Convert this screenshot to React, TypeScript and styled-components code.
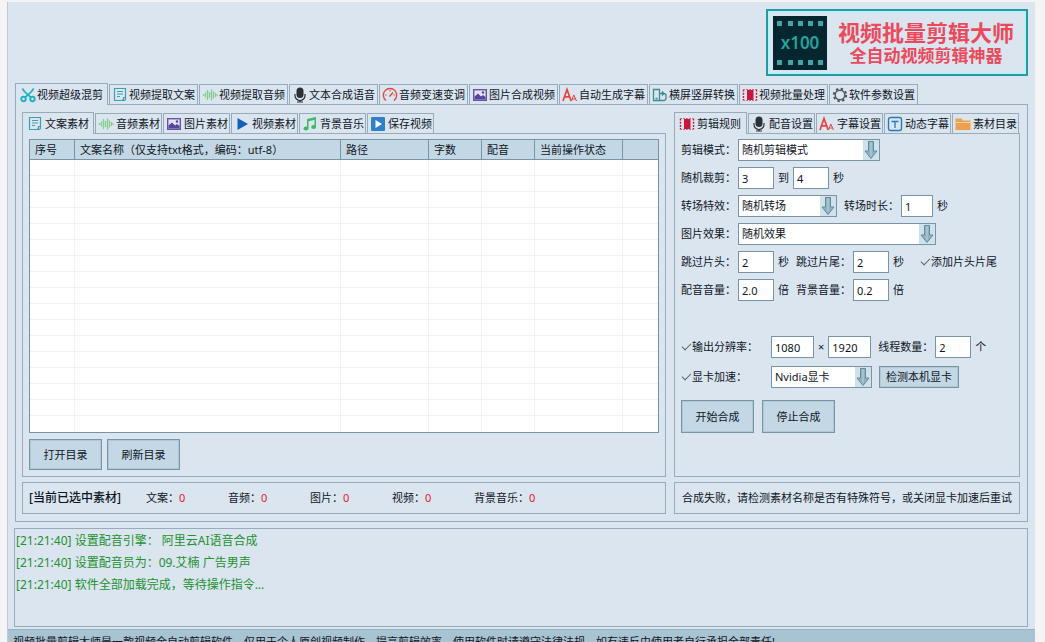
import React from 'react';
import styled, { createGlobalStyle } from 'styled-components';

const c = {
  bg: '#dae5ef',
  line: '#97abba',
  strong: '#7795a7',
  text: '#10161f',
  button: '#c3d8e4',
};

const GlobalStyle = createGlobalStyle`
  * { box-sizing: border-box; }
  body {
    margin: 0;
    height: 100vh;
    overflow: hidden;
    background: #f4f4f4;
    color: ${c.text};
    font-family: "Noto Sans", "Noto Sans CJK SC", sans-serif;
    font-size: 11px;
    line-height: 16px;
  }
  button, input, select { font: inherit; color: inherit; }
`;

const Window = styled.div`
  margin: 2px 10px 0 7px;
  border-left: 1px solid #bccbd6;
  background: ${c.bg};
`;
const Content = styled.div`
  padding: 7px 7px 2px;
`;
const Header = styled.header`
  display: flex;
  justify-content: flex-end;
  padding-bottom: 7px;
`;
const Brand = styled.div`
  display: flex;
  align-items: center;
  gap: 11px;
  width: 262px;
  height: 67px;
  padding: 0 3px;
  border: 2px solid #259a9f;
  box-shadow: inset 0 0 0 2px #b9f1f6;
`;
const BrandMark = styled.div`
  display: grid;
  flex: none;
  margin-left: 2px;
  & > * { grid-area: 1 / 1; place-self: center; }
`;
const MarkText = styled.span`
  font-size: 17px;
  line-height: 20px;
  font-weight: 600;
  color: #27a29d;
`;
const BrandText = styled.div`
  text-align: center;
  font-weight: 700;
  color: #ea4a5c;
  white-space: nowrap;
`;
const BrandTitle = styled.h1`
  margin: 0;
  font-size: 22px;
  line-height: 26px;
`;
const BrandSub = styled.p`
  margin: 0;
  font-size: 17px;
  line-height: 22px;
`;

const TabList = styled.div<{ $tight?: boolean }>`
  display: flex;
  align-items: flex-end;
  gap: 1px;
  height: 22px;
  margin-bottom: -1px;
  position: relative;
  button { gap: ${(p) => (p.$tight ? 1 : 2)}px; }
`;
const Tab = styled.button<{ $w: number }>`
  display: flex;
  align-items: center;
  width: ${(p) => p.$w}px;
  height: 21px;
  padding: 0 0 0 2px;
  border: 1px solid ${c.line};
  background: ${c.bg};
  white-space: nowrap;
  overflow: hidden;
  &[aria-selected='true'] {
    height: 22px;
    padding-left: 4px;
    border-bottom: 0;
  }
  svg { flex: none; }
`;
const Panel = styled.section`
  border: 1px solid ${c.line};
  padding: 7px 7px 7px 6px;
`;
const Columns = styled.div`
  display: grid;
  grid-template-columns: minmax(0, 1fr) 346px;
  gap: 5px 8px;
`;
const Column = styled.div`
  display: flex;
  flex-direction: column;
`;
const SubPanel = styled.div`
  flex: 1;
  border: 1px solid ${c.line};
  padding: 5px 6px 6px;
`;

const Table = styled.table`
  width: 100%;
  table-layout: fixed;
  border: 1px solid ${c.strong};
  border-spacing: 0;
  background: #fff;
  th {
    height: 20px;
    padding: 0 0 0 5px;
    border-left: 1px solid ${c.strong};
    border-bottom: 1px solid ${c.strong};
    background: ${c.button};
    text-align: left;
    font-weight: 400;
    white-space: nowrap;
  }
  th:first-child { border-left: 0; }
  td {
    height: 16px;
    padding: 0;
    border-left: 1px solid #f0f3f4;
    border-bottom: 1px solid #f0f3f4;
  }
  td:first-child { border-left: 0; }
  tr:last-child td { border-bottom: 0; }
`;
const Button = styled.button<{ $small?: boolean }>`
  width: ${(p) => (p.$small ? 80 : 73)}px;
  height: ${(p) => (p.$small ? 22 : 31)}px;
  padding: 0;
  border: 1px solid ${c.strong};
  box-shadow: inset 0 0 0 1px #b0c8d6;
  background: ${c.button};
  white-space: nowrap;
`;
const Actions = styled.div`
  display: flex;
  gap: 5px;
  padding-top: 6px;
`;
const StartActions = styled(Actions)`
  gap: 8px;
  padding-top: 6px;
  ${Button} { height: 33px; }
`;
const StatusBox = styled.div<{ $center?: boolean }>`
  display: flex;
  align-items: center;
  justify-content: ${(p) => (p.$center ? 'center' : 'flex-start')};
  height: 32px;
  padding-left: ${(p) => (p.$center ? 0 : 6)}px;
  border: 1px solid ${c.line};
  white-space: nowrap;
`;
const StatusTitle = styled.strong`
  width: 117px;
  font-size: 12px;
  font-weight: 500;
`;
const Count = styled.span`
  width: 82px;
  b {
    font-weight: 400;
    color: #ee2030;
  }
`;

const Form = styled.form`
  display: flex;
  flex-direction: column;
  gap: 6px;
`;
const Row = styled.div<{ $top?: number }>`
  display: flex;
  align-items: center;
  gap: 7px;
  height: 22px;
  margin-top: ${(p) => p.$top ?? 0}px;
`;
const Field = styled.div`
  display: flex;
  align-items: center;
  gap: 4px;
  white-space: nowrap;
`;
const Label = styled.label`
  width: 53px;
  white-space: nowrap;
`;
const CheckLabel = styled.label<{ $w?: number }>`
  display: flex;
  align-items: center;
  gap: 1px;
  width: ${(p) => (p.$w ? `${p.$w}px` : 'auto')};
  margin-left: ${(p) => (p.$w ? 0 : 9)}px;
  white-space: nowrap;
`;
const Check = styled.input`
  appearance: none;
  display: grid;
  place-items: center;
  flex: none;
  width: 10px;
  height: 10px;
  margin: 0;
  &:checked::before {
    content: '';
    width: 8px;
    height: 4px;
    margin-bottom: 3px;
    border-left: 1px solid #56636d;
    border-bottom: 1px solid #56636d;
    transform: rotate(-45deg);
  }
`;
const Input = styled.input<{ $w?: number }>`
  width: ${(p) => p.$w ?? 36}px;
  height: 22px;
  padding: 0 0 0 3px;
  border: 1px solid ${c.strong};
  border-radius: 0;
  background: #fff;
`;
const SelectBox = styled.div<{ $w: number }>`
  display: grid;
  width: ${(p) => p.$w}px;
  & > * { grid-area: 1 / 1; }
  svg {
    place-self: center end;
    margin-right: 1px;
    pointer-events: none;
  }
`;
const SelectInput = styled.select`
  appearance: none;
  width: 100%;
  height: 22px;
  padding: 0 0 0 3px;
  border: 1px solid ${c.strong};
  border-radius: 0;
  background: #fff;
`;

const Log = styled.div`
  height: 99px;
  margin-top: 6px;
  margin-left: -1px;
  padding: 1px;
  border: 1px solid ${c.line};
  font-size: 12px;
  line-height: 22px;
  color: #23912f;
  p { margin: 0; white-space: pre; }
`;
const Footer = styled.footer`
  padding: 4px 5px;
  border-top: 1px solid #9ab4c4;
  background: #a8c3d2;
  white-space: nowrap;
`;

type IconName =
  | 'scissors' | 'doc' | 'wave' | 'mic' | 'gauge' | 'image' | 'font' | 'rotate'
  | 'film' | 'gear' | 'play' | 'music' | 'save' | 'textbox' | 'folder';

const shapes: Record<IconName, React.ReactNode> = {
  scissors: (
    <g fill="none" stroke="#20b2c0" strokeWidth="1.9">
      <circle cx="3.5" cy="12" r="2.2" /><circle cx="12.5" cy="12" r="2.2" />
      <path d="M2.5 1.5C4 5 8 7.500 11 10.500M13.500 1.500C12 5 8 7.500 5 10.500" />
    </g>
  ),
  doc: (
    <g fill="none" stroke="#3f9fb5" strokeWidth="1.2">
      <path d="M2.500 1.500h11v10.500q0 1.500-1.500 1.500H2.500zM5 4.500h6M5 7h6M5 9.500h3" />
      <path d="M10 13.500q2-.5 1.500-3h2" />
    </g>
  ),
  wave: (
    <path d="M1.500 7v2M3.500 5.500v5M5.500 3v10M7.500 5v6M9.500 2.500v11M11.500 4.500v7M13.500 6v4M15 7.200v1.600" stroke="#84cf8d" strokeWidth="1.3" fill="none" />
  ),
  mic: (
    <g>
      <rect x="4.500" y=".5" width="7" height="10.500" rx="3.500" fill="#2c2f33" />
      <path d="M3 7v1.500a5 5 0 0 0 10 0V7M8 13v2M5 15h6" fill="none" stroke="#2c2f33" strokeWidth="1.200" />
    </g>
  ),
  gauge: (
    <g fill="none" stroke="#db4a43" strokeWidth="1.400">
      <path d="M4 13.500A6.700 6.700 0 1 1 12 13.500M7.500 9.500L11 5.500" />
      <path d="M3 8h1.500M8 3v1.500M11.500 8H13" strokeWidth="1" />
    </g>
  ),
  image: (
    <g>
      <rect x="1.700" y="2.700" width="12.600" height="10.600" fill="#e6e2f6" stroke="#6354a8" strokeWidth="1.400" />
      <path d="M2.500 12.500V9.500l3.500-3 3 3 2-1.500 2.500 2v2.500z" fill="#54469c" />
      <circle cx="11" cy="5.500" r="1.200" fill="#54469c" />
    </g>
  ),
  font: (
    <g fill="none" stroke="#e0453c">
      <path d="M1 14L5 2.500 9.200 14M2.500 9.800h5.200" strokeWidth="1.700" />
      <path d="M9.500 14l2.300-6 2.700 6M10.300 12h3.400" strokeWidth="1" />
    </g>
  ),
  rotate: (
    <g fill="none" stroke="#3b8d91" strokeWidth="1.300">
      <path d="M1.500 2.500h6v11h-6zM7.500 6.500h4q2.500 0 2.500 2v2.500q0 2.500-2.500 2.500h-4M10 4.500l2 2-2 2M3.500 11.500h2" />
    </g>
  ),
  film: (
    <g>
      <rect x="5" y="3" width="6.500" height="10" fill="#c6183c" />
      <path d="M1.500 2.500v11M14.500 2.500v11" stroke="#c6183c" strokeWidth="1.400" strokeDasharray="2 1.200" />
      <path d="M1 2.500h14M1 13.500h14" stroke="#dc6a80" strokeWidth="1" strokeDasharray="2 1" />
    </g>
  ),
  gear: (
    <g fill="none" stroke="#55595e">
      <circle cx="8" cy="8" r="4.800" strokeWidth="1.500" />
      <circle cx="8" cy="8" r="6.200" strokeWidth="2" strokeDasharray="2.430 2.430" />
    </g>
  ),
  play: <path d="M3.500 2l10.500 6-10.500 6z" fill="#1262bd" />,
  music: (
    <g fill="#41b765">
      <path d="M5 3l9-2v2.500L6.500 5.200V12H5z" /><path d="M12.500 3H14v8h-1.500z" />
      <ellipse cx="4" cy="12.500" rx="2.500" ry="2" /><ellipse cx="11.600" cy="11" rx="2.400" ry="2" />
    </g>
  ),
  save: (
    <g>
      <rect x="1" y="1" width="14" height="14" rx="1" fill="#2f7fc9" />
      <path d="M5.500 4l6.500 4-6.500 4z" fill="#fff" />
    </g>
  ),
  textbox: (
    <g fill="none" stroke="#2b78b6">
      <rect x="1.500" y="1.500" width="13" height="13" rx="2" strokeWidth="1.400" />
      <path d="M4.500 5.500h7M8 5.500V12" strokeWidth="1.300" />
    </g>
  ),
  folder: (
    <g>
      <path d="M.5 2.500h6l1.500 2h7.500v9.500H.5z" fill="#eda14d" />
      <path d="M.5 6h15v1H.5z" fill="#ffd7a0" />
    </g>
  ),
};

const Icon = ({ name }: { name: IconName }) => (
  <svg width="16" height="16" viewBox="0 0 16 16" aria-hidden="true">{shapes[name]}</svg>
);

type TabItem = [IconName, string];
type TabsProps = { items: TabItem[]; first: number; rest: number; label: string; tight?: boolean };

const Tabs = ({ items, first, rest, label, tight }: TabsProps) => (
  <TabList role="tablist" aria-label={label} $tight={tight}>
    {items.map(([icon, text], i) => (
      <Tab key={text} type="button" role="tab" aria-selected={i === 0} $w={i === 0 ? first : rest}>
        <Icon name={icon} />
        {text}
      </Tab>
    ))}
  </TabList>
);

const Select = ({ id, value, w, label }: { id: string; value: string; w: number; label?: string }) => (
  <SelectBox $w={w}>
    <SelectInput id={id} defaultValue={value} aria-label={label}>
      <option>{value}</option>
    </SelectInput>
    <svg width="16" height="20" viewBox="0 0 16 20" aria-hidden="true">
      <rect width="16" height="20" fill="#cfe2ec" />
      <path d="M5.500 1.500h5V11H14l-6 7.500L2 11h3.500z" fill="#8fb2c1" stroke="#648b9d" />
      <path d="M8 2v14" stroke="#b9d3df" />
    </svg>
  </SelectBox>
);

const mainTabs: TabItem[] = [
  ['scissors', '视频超级混剪'], ['doc', '视频提取文案'], ['wave', '视频提取音频'],
  ['mic', '文本合成语音'], ['gauge', '音频变速变调'], ['image', '图片合成视频'],
  ['font', '自动生成字幕'], ['rotate', '横屏竖屏转换'], ['film', '视频批量处理'],
  ['gear', '软件参数设置'],
];
const materialTabs: TabItem[] = [
  ['doc', '文案素材'], ['wave', '音频素材'], ['image', '图片素材'],
  ['play', '视频素材'], ['music', '背景音乐'], ['save', '保存视频'],
];
const settingTabs: TabItem[] = [
  ['film', '剪辑规则'], ['mic', '配音设置'], ['font', '字幕设置'],
  ['textbox', '动态字幕'], ['folder', '素材目录'],
];
const columns: [string, number | undefined][] = [
  ['序号', 44], ['文案名称（仅支持txt格式，编码：utf-8）', 266], ['路径', 88],
  ['字数', 53], ['配音', 53], ['当前操作状态', 88], ['', undefined],
];
const counts = ['文案', '音频', '图片', '视频', '背景音乐'];
const holes = [4, 15, 25, 35, 45];

export default function App() {
  return (
    <>
      <GlobalStyle />
      <Window>
        <Content>
          <Header>
            <Brand>
              <BrandMark>
                <svg width="54" height="54" viewBox="0 0 54 54" aria-hidden="true">
                  <rect width="54" height="54" fill="#06262f" />
                  {holes.map((x) => (
                    <g key={x} fill="#3fa5a6">
                      <rect x={x} y="5" width="5" height="5" />
                      <rect x={x} y="44" width="5" height="5" />
                    </g>
                  ))}
                </svg>
                <MarkText>x100</MarkText>
              </BrandMark>
              <BrandText>
                <BrandTitle>视频批量剪辑大师</BrandTitle>
                <BrandSub>全自动视频剪辑神器</BrandSub>
              </BrandText>
            </Brand>
          </Header>

          <Tabs items={mainTabs} first={93} rest={89} label="功能" tight />
          <Panel>
            <Columns>
              <Column>
                <Tabs items={materialTabs} first={72} rest={67} label="素材" />
                <SubPanel>
                  <Table>
                    <colgroup>
                      {columns.map(([name, w]) => <col key={name} width={w} />)}
                    </colgroup>
                    <thead>
                      <tr>{columns.map(([name]) => <th key={name} scope="col">{name}</th>)}</tr>
                    </thead>
                    <tbody>
                      {Array.from({ length: 17 }, (_, r) => (
                        <tr key={r}>{columns.map(([name]) => <td key={name} />)}</tr>
                      ))}
                    </tbody>
                  </Table>
                  <Actions>
                    <Button type="button">打开目录</Button>
                    <Button type="button">刷新目录</Button>
                  </Actions>
                </SubPanel>
              </Column>

              <Column>
                <Tabs items={settingTabs} first={73} rest={67} label="设置" />
                <SubPanel>
                  <Form>
                    <Row>
                      <Field>
                        <Label htmlFor="mode">剪辑模式：</Label>
                        <Select id="mode" value="随机剪辑模式" w={142} />
                      </Field>
                    </Row>
                    <Row>
                      <Field>
                        <Label htmlFor="cutFrom">随机裁剪：</Label>
                        <Input id="cutFrom" defaultValue="3" />
                        <label htmlFor="cutTo">到</label>
                        <Input id="cutTo" defaultValue="4" />
                        <span>秒</span>
                      </Field>
                    </Row>
                    <Row>
                      <Field>
                        <Label htmlFor="transition">转场特效：</Label>
                        <Select id="transition" value="随机转场" w={99} />
                      </Field>
                      <Field>
                        <Label htmlFor="duration">转场时长：</Label>
                        <Input id="duration" defaultValue="1" $w={32} />
                        <span>秒</span>
                      </Field>
                    </Row>
                    <Row>
                      <Field>
                        <Label htmlFor="effect">图片效果：</Label>
                        <Select id="effect" value="随机效果" w={198} />
                      </Field>
                    </Row>
                    <Row>
                      <Field>
                        <Label htmlFor="skipHead">跳过片头：</Label>
                        <Input id="skipHead" defaultValue="2" />
                        <span>秒</span>
                      </Field>
                      <Field>
                        <Label htmlFor="skipTail">跳过片尾：</Label>
                        <Input id="skipTail" defaultValue="2" />
                        <span>秒</span>
                      </Field>
                      <CheckLabel>
                        <Check type="checkbox" defaultChecked />
                        添加片头片尾
                      </CheckLabel>
                    </Row>
                    <Row>
                      <Field>
                        <Label htmlFor="voice">配音音量：</Label>
                        <Input id="voice" defaultValue="2.0" />
                        <span>倍</span>
                      </Field>
                      <Field>
                        <Label htmlFor="music">背景音量：</Label>
                        <Input id="music" defaultValue="0.2" />
                        <span>倍</span>
                      </Field>
                    </Row>
                    <Row $top={29}>
                      <Field>
                        <CheckLabel $w={86}>
                          <Check type="checkbox" defaultChecked />
                          输出分辨率：
                        </CheckLabel>
                        <Input aria-label="宽" defaultValue="1080" $w={43} />
                        <span>×</span>
                        <Input aria-label="高" defaultValue="1920" $w={43} />
                      </Field>
                      <Field>
                        <Label htmlFor="threads">线程数量：</Label>
                        <Input id="threads" defaultValue="2" />
                        <span>个</span>
                      </Field>
                    </Row>
                    <Row $top={2}>
                      <Field>
                        <CheckLabel $w={86}>
                          <Check type="checkbox" defaultChecked />
                          显卡加速：
                        </CheckLabel>
                        <Select id="gpu" value="Nvidia显卡" w={101} label="显卡" />
                      </Field>
                      <Button type="button" $small>检测本机显卡</Button>
                    </Row>
                    <StartActions>
                      <Button type="button">开始合成</Button>
                      <Button type="button">停止合成</Button>
                    </StartActions>
                  </Form>
                </SubPanel>
              </Column>

              <StatusBox>
                <StatusTitle>[当前已选中素材]</StatusTitle>
                {counts.map((name) => (
                  <Count key={name}>{name}：<b>0</b></Count>
                ))}
              </StatusBox>
              <StatusBox $center role="status">
                合成失败，请检测素材名称是否有特殊符号，或关闭显卡加速后重试
              </StatusBox>
            </Columns>
          </Panel>

          <Log role="log">
            <p>[21:21:40] 设置配音引擎： 阿里云AI语音合成</p>
            <p>[21:21:40] 设置配音员为：09.艾楠 广告男声</p>
            <p>[21:21:40] 软件全部加载完成，等待操作指令...</p>
          </Log>
        </Content>
        <Footer>
          视频批量剪辑大师是一款视频全自动剪辑软件，仅用于个人原创视频制作，提高剪辑效率，使用软件时请遵守法律法规，如有违反由使用者自行承担全部责任!
        </Footer>
      </Window>
    </>
  );
}
